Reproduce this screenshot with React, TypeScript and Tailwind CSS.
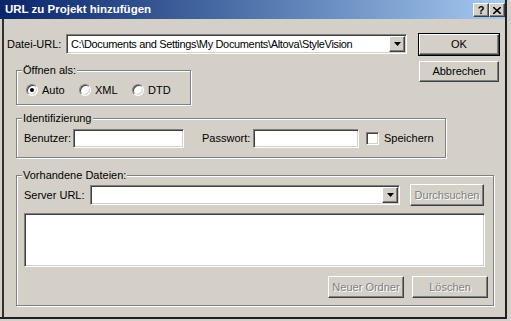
import React from "react";

const raised =
  "border border-t-white border-l-white border-r-[#404040] border-b-[#404040] shadow-[inset_-1px_-1px_0_#808080] bg-[#d4d0c8]";
const sunken =
  "border border-t-[#808080] border-l-[#808080] border-r-white border-b-white shadow-[inset_1px_1px_0_#404040,inset_-1px_-1px_0_#d4d0c8] bg-white";
const groupBox =
  "border border-[#808080] shadow-[inset_1px_1px_0_#fff,1px_1px_0_#fff] ml-[12px]";

function Legend({ text }: { text: string }) {
  return (
    <legend className="ml-[5px] px-[1px] leading-[13px] bg-[#d4d0c8]">{text}</legend>
  );
}

function Button({ text, disabled, className }: { text: string; disabled?: boolean; className?: string }) {
  return (
    <div className={`${raised} flex items-center justify-center ${className ?? ""}`}>
      <span
        className={
          disabled ? "text-[#808080] [text-shadow:1px_1px_0_#fff]" : "text-black"
        }
      >
        {text}
      </span>
    </div>
  );
}

function DropArrow() {
  return (
    <div className={`${raised} w-[16px] h-full flex items-center justify-center`}>
      <svg width="7" height="4" viewBox="0 0 7 4">
        <path d="M0 0h7L3.5 4z" fill="#000" />
      </svg>
    </div>
  );
}

function Combo({ text, className }: { text?: string; className?: string }) {
  return (
    <div className={`${sunken} flex items-stretch p-[1px] ${className ?? ""}`}>
      <div className="flex-1 flex items-center pl-[3px] whitespace-nowrap overflow-hidden tracking-[-0.35px]">{text}</div>
      <DropArrow />
    </div>
  );
}

function Radio({ checked, label, className }: { checked?: boolean; label: string; className?: string }) {
  return (
    <div className={`flex items-center ${className ?? ""}`}>
      <div className="w-[12px] h-[12px] rounded-full border border-t-[#808080] border-l-[#808080] border-r-white border-b-white bg-white shadow-[inset_1px_1px_0_#404040,inset_-1px_-1px_0_#d4d0c8] flex items-center justify-center">
        {checked && <div className="w-[4px] h-[4px] rounded-full bg-black" />}
      </div>
      <span className="ml-[4px]">{label}</span>
    </div>
  );
}

export default function App() {
  return (
    <div
      className="w-[511px] h-[321px] bg-[#d4d0c8] overflow-hidden text-[11px] text-black"
      style={{ fontFamily: '"Liberation Sans", Arial, sans-serif' }}
    >
      <div className="w-[507px] h-[319px] flex flex-col border-r-2 border-b-2 border-[#202020]">
        {/* title bar */}
        <div className="h-[19px] flex items-center justify-between pl-[5px] bg-gradient-to-r from-[#0a246a] to-[#a6caf0]">
          <span className="text-white font-bold text-[11.5px]">URL zu Projekt hinzufügen</span>
          <div className="flex mt-[1px]">
            <div className={`${raised} w-[16px] h-[14px] flex items-center justify-center font-bold text-[11px] leading-none`}>?</div>
            <div className={`${raised} w-[16px] h-[14px] flex items-center justify-center`}>
              <svg width="8" height="7" viewBox="0 0 8 7">
                <path d="M0 0L8 7M8 0L0 7" stroke="#000" strokeWidth="1.6" />
              </svg>
            </div>
          </div>
        </div>

        <div className="flex-1 ml-[2px] border-l-2 border-[#303030] flex flex-col">
          {/* top section */}
          <div className="flex mt-[14px]">
            <div className="w-[403px] flex flex-col">
              <div className="h-[23px] flex items-start">
                <span className="w-[62px] pl-[3px] mt-[1px] leading-[20px]">Datei-URL:</span>
                <Combo
                  className="w-[341px] h-[20px] mt-[1px]"
                  text={"C:\\Documents and Settings\\My Documents\\Altova\\StyleVision"}
                />
              </div>
              <fieldset className={`${groupBox} mt-[8px] w-[175px] h-[41px]`}>
                <Legend text="Öffnen als:" />
                <div className="flex items-center mt-[5px] pl-[9px]">
                  <Radio checked label="Auto" className="w-[53px]" />
                  <Radio label="XML" className="w-[53px]" />
                  <Radio label="DTD" />
                </div>
              </fieldset>
            </div>
            <div className="ml-[11px] flex flex-col">
              <div className="w-[82px] h-[23px] border border-black flex">
                <Button text="OK" className="flex-1" />
              </div>
              <Button text="Abbrechen" className="mt-[5px] ml-[1px] w-[80px] h-[21px]" />
            </div>
          </div>

          {/* Identifizierung */}
          <fieldset className={`${groupBox} mt-[7px] w-[430px] h-[46px]`}>
            <Legend text="Identifizierung" />
            <div className="flex items-center mt-[4px] pl-[7px]">
              <span className="w-[49px]">Benutzer:</span>
              <div className={`${sunken} w-[111px] h-[19px]`} />
              <span className="ml-[18px] w-[51px]">Passwort:</span>
              <div className={`${sunken} w-[106px] h-[19px]`} />
              <div className={`${sunken} ml-[7px] w-[13px] h-[13px]`} />
              <span className="ml-[5px]">Speichern</span>
            </div>
          </fieldset>

          {/* Vorhandene Dateien */}
          <fieldset className={`${groupBox} mt-[11px] w-[478px] h-[137px]`}>
            <Legend text="Vorhandene Dateien:" />
            <div className="flex items-center mt-[2px] pl-[7px]">
              <span className="w-[66px]">Server URL:</span>
              <Combo className="w-[310px] h-[20px]" />
              <Button text="Durchsuchen" disabled className="ml-[10px] w-[74px] h-[22px]" />
            </div>
            <div className={`${sunken} mt-[7px] ml-[7px] w-[461px] h-[54px]`} />
            <div className="flex justify-end gap-[8px] mt-[9px] pr-[5px]">
              <Button text="Neuer Ordner" disabled className="w-[76px] h-[22px]" />
              <Button text="Löschen" disabled className="w-[76px] h-[22px]" />
            </div>
          </fieldset>
        </div>
      </div>
    </div>
  );
}
